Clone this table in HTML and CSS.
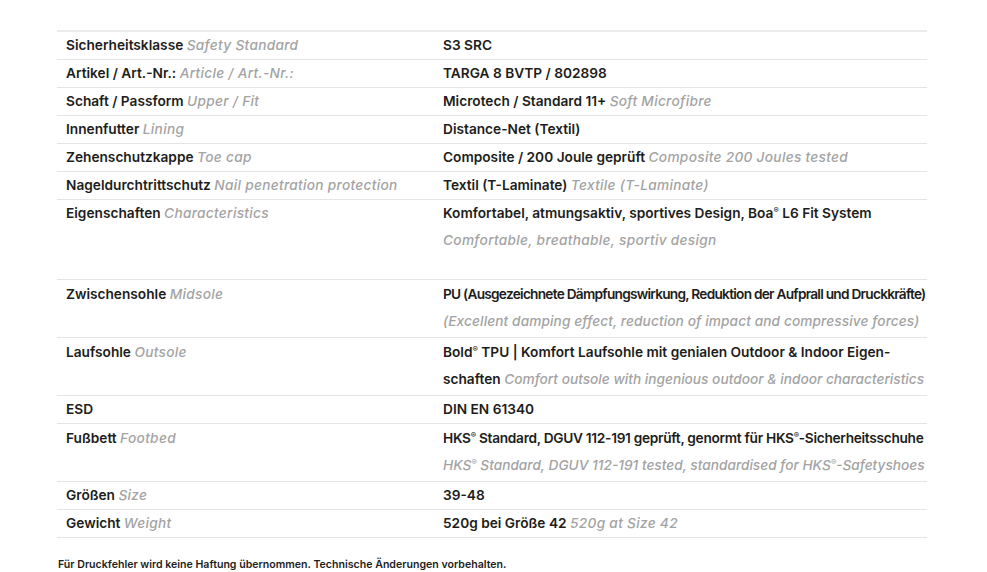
FILE: index.html
```html
<!DOCTYPE html>
<html lang="de">
<head>
<meta charset="utf-8">
<title>TARGA 8 BVTP – Technische Daten</title>
<link rel="stylesheet" href="styles.css">
</head>
<body>
<div class="page">
  <table class="spec">
    <colgroup><col class="c-label"><col class="c-value"></colgroup>
    <tbody>
      <tr><td>Sicherheitsklasse <em>Safety Standard</em></td><td>S3 SRC</td></tr>
      <tr><td>Artikel / Art.-Nr.: <em>Article / Art.-Nr.:</em></td><td>TARGA 8 BVTP / 802898</td></tr>
      <tr><td>Schaft / Passform <em>Upper / Fit</em></td><td>Microtech / Standard 11+ <em>Soft Microfibre</em></td></tr>
      <tr><td>Innenfutter <em>Lining</em></td><td>Distance-Net (Textil)</td></tr>
      <tr><td>Zehenschutzkappe <em>Toe cap</em></td><td>Composite / 200 Joule geprüft <em>Composite 200 Joules tested</em></td></tr>
      <tr><td>Nageldurchtrittschutz <em>Nail penetration protection</em></td><td>Textil (T-Laminate) <em>Textile (T-Laminate)</em></td></tr>
      <tr class="tall"><td>Eigenschaften <em>Characteristics</em></td><td>Komfortabel, atmungsaktiv, sportives Design, Boa<sup>®</sup> L6 Fit System<br><em>Comfortable, breathable, sportiv design</em></td></tr>
      <tr class="double"><td>Zwischensohle <em>Midsole</em></td><td><span class="tight">PU (Ausgezeichnete Dämpfungswirkung, Reduktion der Aufprall und Druckkräfte)</span><br><em class="fit-wide">(Excellent damping effect, reduction of impact and compressive forces)</em></td></tr>
      <tr class="double"><td>Laufsohle <em>Outsole</em></td><td>Bold<sup>®</sup> TPU | Komfort Laufsohle mit genialen Outdoor &amp; Indoor Eigen-<br>schaften <em class="fit">Comfort outsole with ingenious outdoor &amp; indoor characteristics</em></td></tr>
      <tr><td>ESD</td><td>DIN EN 61340</td></tr>
      <tr class="double"><td>Fußbett <em>Footbed</em></td><td><span class="snug">HKS<sup>®</sup> Standard, DGUV 112-191 geprüft, genormt für HKS<sup>®</sup>-Sicherheitsschuhe</span><br><em class="fit">HKS<sup>®</sup> Standard, DGUV 112-191 tested, standardised for HKS<sup>®</sup>-Safetyshoes</em></td></tr>
      <tr><td>Größen <em>Size</em></td><td>39-48</td></tr>
      <tr><td>Gewicht <em>Weight</em></td><td>520g bei Größe 42 <em>520g at Size 42</em></td></tr>
    </tbody>
  </table>
  <p class="note">Für Druckfehler wird keine Haftung übernommen. Technische Änderungen vorbehalten.</p>
</div>
</body>
</html>
```
FILE: styles.css
```css
html, body {
  margin: 0;
  padding: 0;
  background: #ffffff;
}
body {
  font-family: Inter, "Noto Sans", "Liberation Sans", sans-serif;
  color: #1d1d1b;
}
.page {
  padding: 30px 60px 0 57px;
}
.spec {
  width: 870px;
  table-layout: fixed;
  border-collapse: collapse;
  border-top: 2px solid #ececec;
  font-size: 13.7px;
  font-weight: 600;
  line-height: 27px;
}
.c-label { width: 377px; }
.spec td {
  padding: 0 0 0 9px;
  vertical-align: top;
  border-bottom: 1px solid #e4e4e4;
  white-space: nowrap;
}
.spec em {
  color: #a3a3a3;
  font-style: italic;
  font-weight: 500;
  letter-spacing: 0.3px;
}
.spec em.fit {
  letter-spacing: 0;
}
.spec em.fit-wide {
  letter-spacing: 0.1px;
}
.spec sup {
  font-size: 8px;
  line-height: 0;
  vertical-align: 5px;
}
.spec .tall td {
  padding-bottom: 25px;
}
.spec .double td {
  padding-top: 1px;
  padding-bottom: 2px;
}
.tight {
  letter-spacing: -0.75px;
}
.snug {
  letter-spacing: -0.29px;
}
.note {
  margin: 20px 0 0 1px;
  font-size: 10.6px;
  font-weight: 600;
  color: #1d1d1b;
}
```
